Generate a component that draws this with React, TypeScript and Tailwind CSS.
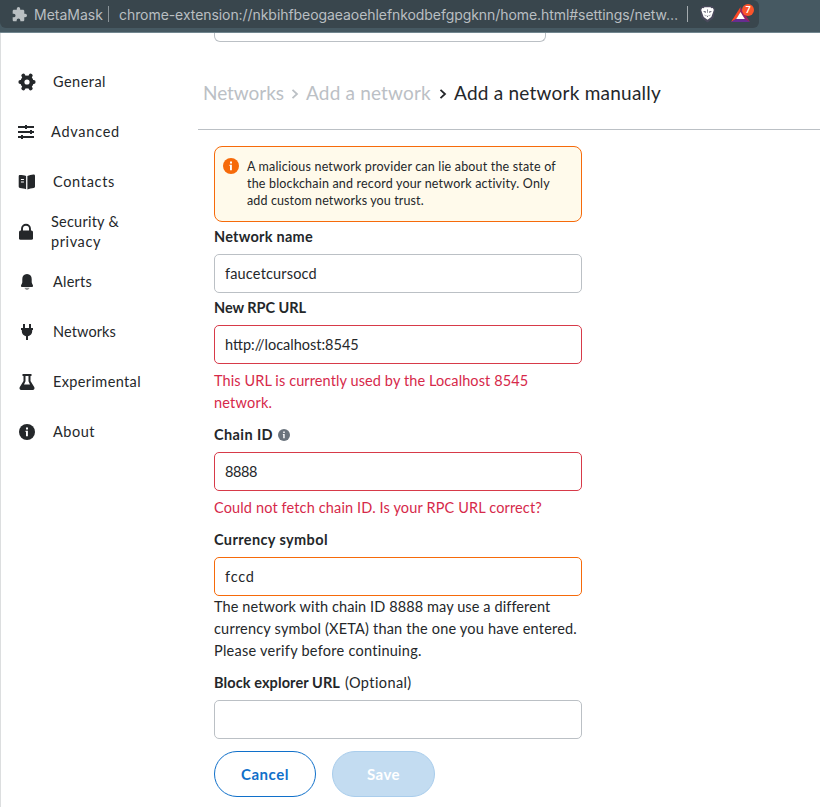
import type { ReactNode } from 'react';

function CogIcon() {
  return (
    <svg width="18" height="18" viewBox="0 0 18 18" fill="none" stroke="#24272a">
      <circle cx="9" cy="9" r="4.6" strokeWidth="4" />
      <path d="M5.3 2.6l.8 1.3M12.7 2.6l-.8 1.3M5.3 15.4l.8-1.3M12.7 15.4l-.8-1.3M2.3 9h1M15.7 9h-1" strokeWidth="3.8" strokeLinecap="round" />
    </svg>
  );
}

function SlidersIcon() {
  return (
    <svg width="16" height="16" viewBox="0 0 16 16" fill="#24272a">
      <path d="M0 2h16v2H0zM0 7h16v2H0zM0 12h16v2H0z" />
      <path d="M7 1h2v4H7zM12 6h2v4h-2zM3 11h2v4H3z" />
    </svg>
  );
}

function BookIcon() {
  return (
    <svg width="18" height="18" viewBox="0 0 18 18" fill="#24272a">
      <path d="M8.1 3.1v13.2C6.5 15.5 4 15 2 14.9c-.8 0-1.3-.5-1.3-1.3V3.4c0-.8.5-1.3 1.3-1.3 2 0 4.400.4 6.100 1z" />
      <path d="M9.400 3.100c1.700-.9 4.200-1.500 6-1.600 1 0 1.600.5 1.600 1.400v10.600c0 .8-.5 1.300-1.300 1.400-1.900.1-4.500.6-6.300 1.500z" />
      <path d="M2.900 6.500h3M2.900 9h3" stroke="#fff" strokeWidth="1.200" />
    </svg>
  );
}

function LockIcon() {
  return (
    <svg width="16" height="18" viewBox="0 0 16 18" fill="none">
      <path d="M4 8V5.800a4 4 0 0 1 8 0V8" stroke="#24272a" strokeWidth="1.900" />
      <rect x="1" y="7.600" width="14" height="9.200" rx="1.600" fill="#24272a" />
    </svg>
  );
}

function BellIcon() {
  return (
    <svg width="18" height="18" viewBox="0 0 18 18" fill="#24272a">
      <path d="M9 1C5.800 1.200 4.300 3.300 4.300 6v3.300c0 .8-.6 1.700-1.100 2.600-.6 1.100 0 2.200 1.200 2.200h9.200c1.200 0 1.800-1.100 1.200-2.200-.5-.9-1.100-1.800-1.100-2.600V6C13.700 3.300 12.200 1.200 9 1z" />
      <path d="M6.500 14.800h5c-.4 1.300-1.300 2.100-2.500 2.100s-2.100-.8-2.500-2.100z" opacity=".5" />
    </svg>
  );
}

function PlugIcon() {
  return (
    <svg width="18" height="18" viewBox="0 0 18 18" fill="#24272a">
      <path d="M5 1h2v4H5zM11 1h2v4h-2zM3 5h12v2H3z" />
      <path d="M3.800 6.500h10.400v1.700c0 2.500-1.700 4.500-4.200 5V17H8v-3.800c-2.500-.5-4.200-2.500-4.200-5z" />
    </svg>
  );
}

function FlaskIcon() {
  return (
    <svg width="18" height="18" viewBox="0 0 18 18">
      <path fillRule="evenodd" fill="#24272a" d="M4.500 1h9v2h-1v5l3.700 6c.8 1.500 0 3-1.500 3H3.300c-1.500 0-2.300-1.500-1.500-3l3.700-6V3h-1zM7.500 3v5.300L6 11.400h6l-1.500-3.100V3z" />
    </svg>
  );
}

function InfoIcon({ size, color }: { size: number; color: string }) {
  return (
    <svg width={size} height={size} viewBox="0 0 16 16" className="shrink-0">
      <circle cx="8" cy="8" r="8" fill={color} />
      <path d="M6.500 6.700h2.400v5.500H7V8h-.5zM7 3.400h2v2H7z" fill="#fff" />
    </svg>
  );
}

function AddressBar() {
  return (
    <header className="h-[33px] shrink-0 border-b border-[#71868f] bg-[#465962]">
      <div className="flex h-7 w-[759px] items-center rounded-r-md rounded-bl-md bg-[#39464d] font-['Inter',sans-serif] text-[14px] text-[#b9bfc2]">
        <svg width="15" height="15" viewBox="1 1 22 22" fill="#b9bfc2" className="ml-3 shrink-0">
          <path d="M20.500 11H19V7c0-1.100-.9-2-2-2h-4V3.500a2.500 2.500 0 0 0-5 0V5H4c-1.100 0-2 .9-2 2v3.800h1.500a2.700 2.700 0 0 1 0 5.400H2V20c0 1.100.9 2 2 2h3.800v-1.500a2.700 2.700 0 0 1 5.400 0V22H17c1.100 0 2-.9 2-2v-4h1.500a2.500 2.500 0 0 0 0-5z" />
        </svg>
        <span className="ml-[7px] w-[74px] shrink-0 whitespace-nowrap">MetaMask</span>
        <i className="h-4 w-px shrink-0 bg-[#8b9499]" />
        <span className="ml-[10px] w-[568px] shrink-0 whitespace-nowrap tracking-[-0.065px]">
          chrome-extension://nkbihfbeogaeaoehlefnkodbefgpgknn/home.html#settings/netw…
        </span>
        <i className="h-4 w-px shrink-0 bg-[#a4abaf]" />
        <svg width="17" height="18" viewBox="0 0 17 18" className="ml-[11px] shrink-0">
          <path d="M4 1h9l3 3-1.500 9-6 4.500-6-4.500L1 4z" fill="#4a4a5c" />
          <path d="M5.500 2.200h6l1 1 1.300-.2 1 2-1 3-1.500 4-3.800 2.800L4.700 12 3.200 8l-1-3 1-2 1.300.2z" fill="#fff" />
          <path d="M4 6l3 .6-.6 1.300zM13 6l-3 .6.6 1.300zM7.300 10.200l1.200.7 1.200-.7-1.200 2zM8.100 4.500h.8L8.700 8h-.4zM5.500 9.500l1 .8-.3 1.200zM11.500 9.500l-1 .8.3 1.200z" fill="#4a4a5c" />
        </svg>
        <div className="relative ml-[15px] h-5 w-6 shrink-0">
          <svg width="20" height="20" viewBox="0 0 20 20">
            <path d="M9.500 3L0 18l5.300-3L9.500 8z" fill="#ff4724" />
            <path d="M0 18h19l-5.200-3.400H5.500z" fill="#662d91" />
            <path d="M9.500 3L19 18l-5.300-3-4.200-7z" fill="#9e1f63" />
            <path d="M9.500 8l4.300 7H5.200z" fill="#fff" />
          </svg>
          <span className="absolute top-[0px] left-[11px] flex h-3 w-3 items-center justify-center rounded-full bg-[#fb542b] text-[9px] font-semibold text-white">7</span>
        </div>
      </div>
    </header>
  );
}

function NavItem({ icon, narrow, children }: { icon: ReactNode; narrow?: boolean; children: ReactNode }) {
  return (
    <li className="flex h-[50px] items-center">
      {icon}
      <div className={narrow ? 'ml-[17px] leading-5' : 'ml-[17px] leading-5'}>{children}</div>
    </li>
  );
}

function Sidebar() {
  return (
    <ul className="w-[197px] shrink-0 pt-6 pl-[17px] text-[14.5px] whitespace-nowrap">
      <NavItem icon={<CogIcon />}><span className="tracking-[0.47px]">General</span></NavItem>
      <NavItem icon={<SlidersIcon />} narrow><span className="tracking-[0.75px]">Advanced</span></NavItem>
      <NavItem icon={<BookIcon />}><span className="tracking-[0.68px]">Contacts</span></NavItem>
      <NavItem icon={<LockIcon />} narrow>
        <span className="block tracking-[0.24px]">Security &amp;</span>
        <span className="block tracking-[0.6px]">privacy</span>
      </NavItem>
      <NavItem icon={<BellIcon />}><span className="tracking-[0.23px]">Alerts</span></NavItem>
      <NavItem icon={<PlugIcon />}><span className="tracking-[0.11px]">Networks</span></NavItem>
      <NavItem icon={<FlaskIcon />}><span className="tracking-[0.37px]">Experimental</span></NavItem>
      <NavItem icon={<span className="flex w-[18px] justify-center"><InfoIcon size={16} color="#24272a" /></span>}><span className="tracking-[0.5px]">About</span></NavItem>
    </ul>
  );
}

function Chevron({ color }: { color: string }) {
  return (
    <svg width="8" height="12" viewBox="0 0 8 12" fill="none" stroke={color} strokeWidth="1.800">
      <path d="M1.500 1.800L6 6l-4.500 4.200" />
    </svg>
  );
}

function Breadcrumb() {
  return (
    <nav className="flex h-[88px] items-center border-b border-[#bbc0c5] pt-4 pl-[5px] text-[19px] whitespace-nowrap text-[#bbc0c5]">
      <span className="w-[88px] tracking-[-0.05px]">Networks</span>
      <Chevron color="#bbc0c5" />
      <span className="ml-[7px] w-[133px] tracking-[0.18px]">Add a network</span>
      <Chevron color="#24272a" />
      <span className="ml-[7px] tracking-[0.23px] text-[#24272a]">Add a network manually</span>
    </nav>
  );
}

function Input({ value, border }: { value: string; border: string }) {
  return (
    <div className={'flex h-[39px] items-center rounded-[5px] border pl-[10px] ' + border}>
      <span className={value === '8888' ? 'tracking-[-0.42px]' : value === 'fccd' ? 'tracking-[0.8px]' : value === 'faucetcursocd' ? 'tracking-[0.18px]' : ''}>{value}</span>
    </div>
  );
}

export default function App() {
  return (
    <div className="flex h-[807px] w-[820px] flex-col overflow-hidden bg-white font-['Lato',sans-serif] text-[#24272a]">
      <AddressBar />
      <div className="flex flex-1 border-l border-[#dcdedf]">
        <Sidebar />
        <main className="flex-1">
          <div className="ml-4 h-[9px] w-[332px] rounded-b-[6px] border border-t-0 border-[#bbc0c5]" />
          <Breadcrumb />
          <form className="ml-4 w-[368px] pt-4 text-[14.5px] leading-[22px] whitespace-nowrap">
            <div className="flex h-[76px] rounded-lg border border-[#f66a0a] bg-[#fffaeb] pt-[11px] pl-2">
              <InfoIcon size={16} color="#f66a0a" />
              <p className="ml-2 text-[12.500px] leading-[17px]">
                <span className="block tracking-[0.18px]">A malicious network provider can lie about the state of</span>
                <span className="block tracking-[0.19px]">the blockchain and record your network activity. Only</span>
                <span className="block tracking-[0.12px]">add custom networks you trust.</span>
              </p>
            </div>

            <div className="mt-1 mb-1.5 font-bold tracking-[0.25px]">Network name</div>
            <Input value="faucetcursocd" border="border-[#bbc0c5]" />

            <div className="mt-1 mb-1.5 font-bold tracking-[-0.04px]">New RPC URL</div>
            <Input value="http://localhost:8545" border="border-[#d73a49]" />
            <p className="mt-1.5 text-[#d6294a]">
              <span className="block tracking-[0.1px]">This URL is currently used by the Localhost 8545</span>
              <span className="block tracking-[0.2px]">network.</span>
            </p>

            <div className="mt-[10px] mb-1.5 flex items-center font-bold tracking-[0.4px]">
              <span className="mr-[5px]">Chain ID</span>
              <InfoIcon size={12} color="#6a737d" />
            </div>
            <Input value="8888" border="border-[#d73a49]" />
            <p className="mt-1.5 tracking-[0.14px] text-[#d6294a]">Could not fetch chain ID. Is your RPC URL correct?</p>

            <div className="mt-[10px] mb-1.5 font-bold tracking-[0.38px]">Currency symbol</div>
            <Input value="fccd" border="border-[#f66a0a]" />
            <p>
              <span className="block tracking-[0.1px]">The network with chain ID 8888 may use a different</span>
              <span className="block tracking-[0.2px]">currency symbol (XETA) than the one you have entered.</span>
              <span className="block tracking-[0.26px]">Please verify before continuing.</span>
            </p>

            <div className="mt-[10px] mb-1.5">
              <b className="tracking-[0.1px]">Block explorer URL</b>
              <span className="ml-[5px] tracking-[0.41px]">(Optional)</span>
            </div>
            <Input value="" border="border-[#bbc0c5]" />

            <div className="mt-3 flex gap-4 text-[15px] font-bold">
              <button type="button" className="h-[46px] w-[102px] rounded-full border border-[#1070ca] tracking-[0.53px] text-[#1070ca]">Cancel</button>
              <button type="button" className="h-[46px] w-[103px] rounded-full border border-[#a9cdec] bg-[#c3dcf1] tracking-[0.43px] text-white">Save</button>
            </div>
          </form>
        </main>
      </div>
    </div>
  );
}
